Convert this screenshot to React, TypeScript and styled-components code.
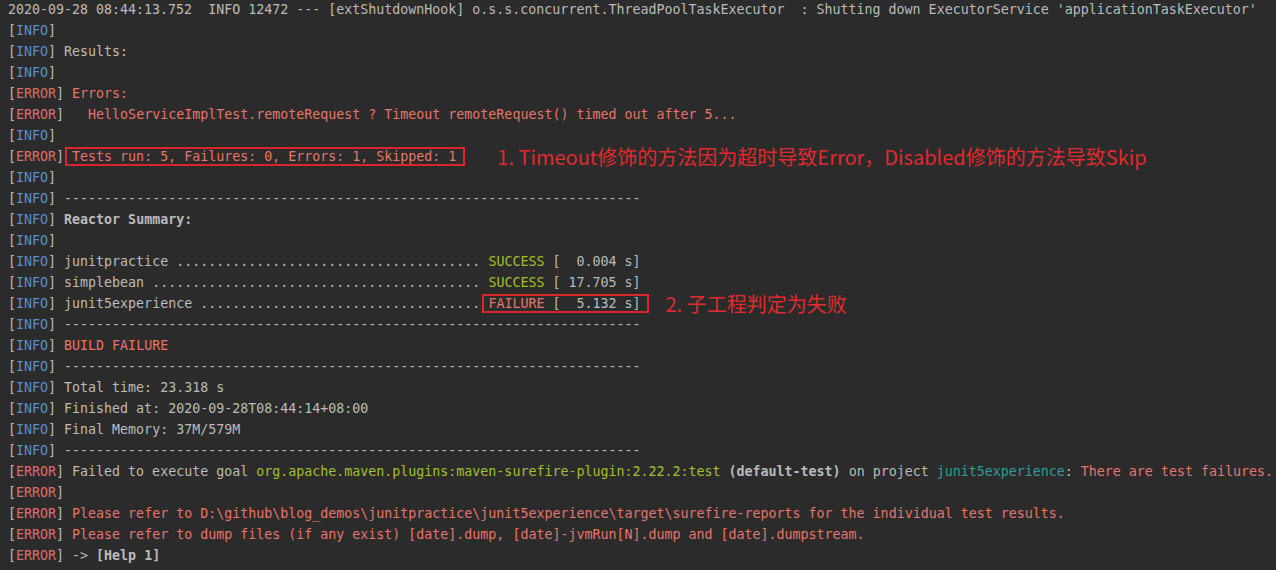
import React from "react";
import styled, { createGlobalStyle } from "styled-components";

const Global = createGlobalStyle`
  html, body {
    margin: 0;
    padding: 0;
    background: #2b2b2b;
    height: 570px;
    overflow: hidden;
  }
`;

const Terminal = styled.div`
  box-sizing: border-box;
  width: 1276px;
  height: 570px;
  padding: 0 0 0 8px;
  margin-top: -1px;
  background: #2b2b2b;
  color: #bbbbbb;
  font-family: "DejaVu Sans Mono", "Liberation Mono", monospace;
  font-size: 13.3px;
  line-height: 21px;
  white-space: pre;
`;

const Line = styled.div`
  height: 21px;
  line-height: 21px;
`;

const Label = styled.span<{ $kind: "info" | "error" }>`
  color: ${(p) => (p.$kind === "info" ? "#5a8dd0" : "#d96f6b")};
`;

const Msg = styled.span<{ $tone?: "err" | "ok" | "teal" | "plain"; $bold?: boolean }>`
  color: ${(p) =>
    p.$tone === "err"
      ? "#e5766e"
      : p.$tone === "ok"
      ? "#a6bf2b"
      : p.$tone === "teal"
      ? "#2f9d9d"
      : "#bbbbbb"};
  font-weight: ${(p) => (p.$bold ? "bold" : "normal")};
`;

const Boxed = styled.span<{ $left: number; $right: number }>`
  position: relative;
  &::after {
    content: "";
    position: absolute;
    top: -2px;
    bottom: -2px;
    left: ${(p) => -p.$left}px;
    right: ${(p) => -p.$right}px;
    border: 2px solid #d9262c;
    box-sizing: border-box;
    pointer-events: none;
  }
`;

const Note = styled.span<{ $gap: number }>`
  display: inline-block;
  vertical-align: top;
  height: 21px;
  line-height: 21px;
  margin-left: ${(p) => p.$gap}px;
  font-family: "Noto Sans CJK SC", "Noto Sans", sans-serif;
  font-size: 20px;
  color: #e02a2f;
  white-space: nowrap;
`;

const Tag = ({ kind }: { kind: "info" | "error" }) => (
  <>
    [<Label $kind={kind}>{kind === "info" ? "INFO" : "ERROR"}</Label>]
  </>
);

const DASHES = "-".repeat(72);

export default function App() {
  return (
    <>
      <Global />
      <Terminal>
        <Line>
          2020-09-28 08:44:13.752  INFO 12472 --- [extShutdownHook] o.s.s.concurrent.ThreadPoolTaskExecutor  : Shutting down ExecutorService 'applicationTaskExecutor'
        </Line>
        <Line><Tag kind="info" /></Line>
        <Line><Tag kind="info" /> Results:</Line>
        <Line><Tag kind="info" /></Line>
        <Line><Tag kind="error" /> <Msg $tone="err">Errors:</Msg></Line>
        <Line>
          <Tag kind="error" />   <Msg $tone="err">HelloServiceImplTest.remoteRequest ? Timeout remoteRequest() timed out after 5...</Msg>
        </Line>
        <Line><Tag kind="info" /></Line>
        <Line>
          <Tag kind="error" />{" "}
          <Boxed $left={7} $right={9}>
            <Msg $tone="err">Tests run: 5, Failures: 0, Errors: 1, Skipped: 1</Msg>
          </Boxed>
          <Note $gap={41}>1. Timeout修饰的方法因为超时导致Error，Disabled修饰的方法导致Skip</Note>
        </Line>
        <Line><Tag kind="info" /></Line>
        <Line><Tag kind="info" /> {DASHES}</Line>
        <Line><Tag kind="info" /> <Msg $bold>Reactor Summary:</Msg></Line>
        <Line><Tag kind="info" /></Line>
        <Line>
          <Tag kind="info" /> junitpractice {".".repeat(38)} <Msg $tone="ok">SUCCESS</Msg> [  0.004 s]
        </Line>
        <Line>
          <Tag kind="info" /> simplebean {".".repeat(41)} <Msg $tone="ok">SUCCESS</Msg> [ 17.705 s]
        </Line>
        <Line>
          <Tag kind="info" /> junit5experience {".".repeat(35)}{" "}
          <Boxed $left={6} $right={8}>
            <Msg $tone="err">FAILURE</Msg> [  5.132 s]
          </Boxed>
          <Note $gap={25}>2. 子工程判定为失败</Note>
        </Line>
        <Line><Tag kind="info" /> {DASHES}</Line>
        <Line><Tag kind="info" /> <Msg $tone="err">BUILD FAILURE</Msg></Line>
        <Line><Tag kind="info" /> {DASHES}</Line>
        <Line><Tag kind="info" /> Total time: 23.318 s</Line>
        <Line><Tag kind="info" /> Finished at: 2020-09-28T08:44:14+08:00</Line>
        <Line><Tag kind="info" /> Final Memory: 37M/579M</Line>
        <Line><Tag kind="info" /> {DASHES}</Line>
        <Line>
          <Tag kind="error" /> Failed to execute goal{" "}
          <Msg $tone="ok">org.apache.maven.plugins:maven-surefire-plugin:2.22.2:test</Msg>{" "}
          <Msg $bold>(default-test)</Msg> on project <Msg $tone="teal">junit5experience</Msg>:{" "}
          <Msg $tone="err">There are test failures.</Msg>
        </Line>
        <Line><Tag kind="error" /></Line>
        <Line>
          <Tag kind="error" />{" "}
          <Msg $tone="err">Please refer to D:\github\blog_demos\junitpractice\junit5experience\target\surefire-reports for the individual test results.</Msg>
        </Line>
        <Line>
          <Tag kind="error" />{" "}
          <Msg $tone="err">Please refer to dump files (if any exist) [date].dump, [date]-jvmRun[N].dump and [date].dumpstream.</Msg>
        </Line>
        <Line>
          <Tag kind="error" /> -&gt; <Msg $bold>[Help 1]</Msg>
        </Line>
      </Terminal>
    </>
  );
}
